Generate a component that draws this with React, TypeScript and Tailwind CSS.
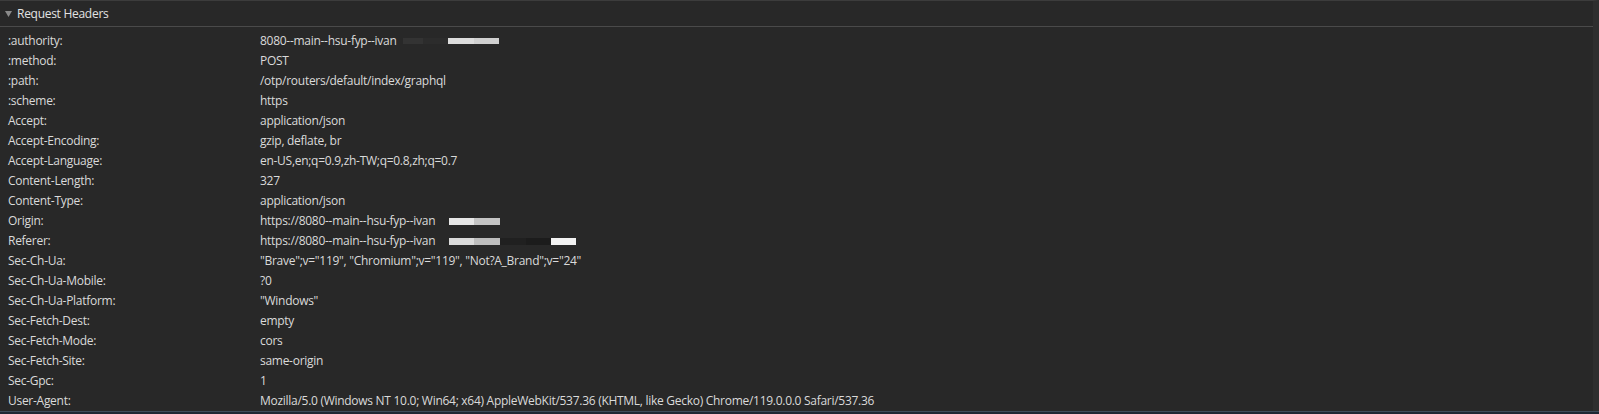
import React from 'react';

const headers: [string, string][] = [
  [':authority:', '8080--main--hsu-fyp--ivan'],
  [':method:', 'POST'],
  [':path:', '/otp/routers/default/index/graphql'],
  [':scheme:', 'https'],
  ['Accept:', 'application/json'],
  ['Accept-Encoding:', 'gzip, deflate, br'],
  ['Accept-Language:', 'en-US,en;q=0.9,zh-TW;q=0.8,zh;q=0.7'],
  ['Content-Length:', '327'],
  ['Content-Type:', 'application/json'],
  ['Origin:', 'https://8080--main--hsu-fyp--ivan'],
  ['Referer:', 'https://8080--main--hsu-fyp--ivan'],
  ['Sec-Ch-Ua:', '"Brave";v="119", "Chromium";v="119", "Not?A_Brand";v="24"'],
  ['Sec-Ch-Ua-Mobile:', '?0'],
  ['Sec-Ch-Ua-Platform:', '"Windows"'],
  ['Sec-Fetch-Dest:', 'empty'],
  ['Sec-Fetch-Mode:', 'cors'],
  ['Sec-Fetch-Site:', 'same-origin'],
  ['Sec-Gpc:', '1'],
  [
    'User-Agent:',
    'Mozilla/5.0 (Windows NT 10.0; Win64; x64) AppleWebKit/537.36 (KHTML, like Gecko) Chrome/119.0.0.0 Safari/537.36',
  ],
];

// redacted bits after the host name
function Redacted({ name }: { name: string }) {
  if (name === ':authority:') {
    return (
      <span className="ml-[6px] inline-flex items-center">
        <span className="h-[6px] w-[20px] bg-[#333333]" />
        <span className="h-[6px] w-[25px] bg-[#2c2c2c]" />
        <span className="h-[6px] w-[26px] bg-[#dcdcdc]" />
        <span className="h-[6px] w-[25px] bg-[#d0d0d0]" />
      </span>
    );
  }
  if (name === 'Origin:') {
    return (
      <span className="ml-[14px] inline-flex items-center">
        <span className="h-[7px] w-[25px] bg-[#e6e6e6]" />
        <span className="h-[7px] w-[26px] bg-[#c4c4c4]" />
      </span>
    );
  }
  if (name === 'Referer:') {
    return (
      <span className="ml-[14px] inline-flex items-center">
        <span className="h-[7px] w-[25px] bg-[#dadada]" />
        <span className="h-[7px] w-[26px] bg-[#bdbdbd]" />
        <span className="h-[7px] w-[26px] bg-[#202020]" />
        <span className="h-[7px] w-[25px] bg-[#1c1c1c]" />
        <span className="h-[7px] w-[25px] bg-[#f2f2f2]" />
      </span>
    );
  }
  return null;
}

export default function App() {
  return (
    <div
      className="h-[414px] w-[1599px] overflow-hidden bg-[#282828] text-[12px] tracking-[-0.28px] text-[#dadada] flex flex-col"
      style={{ fontFamily: '"Open Sans", "Noto Sans", sans-serif' }}
    >
      <div className="flex flex-1 flex-col border-t border-[#3c3c3c] border-r-[6px] border-r-[#2e2e2e]">
        {/* Section header */}
        <div className="flex h-[26px] shrink-0 items-center gap-[5px] border-b border-[#4a4a4a] pl-[5px]">
          <svg width="7" height="6" viewBox="0 0 7 6">
            <path d="M0 0 L7 0 L3.5 6 Z" fill="#8a8a8a" />
          </svg>
          <span className="text-[#e2e2e2]">Request Headers</span>
        </div>

        <div className="flex flex-col pt-[4px]">
          {headers.map(([name, value]) => (
            <div key={name} className="flex h-[20px] items-center">
              <div className="w-[260px] shrink-0 pl-[8px]">{name}</div>
              <div className="flex items-center whitespace-nowrap">
                <span>{value}</span>
                <Redacted name={name} />
              </div>
            </div>
          ))}
        </div>
      </div>
      <div className="h-[4px] shrink-0 border-t border-[#3d4c5a] bg-[#1d2733]" />
    </div>
  );
}
